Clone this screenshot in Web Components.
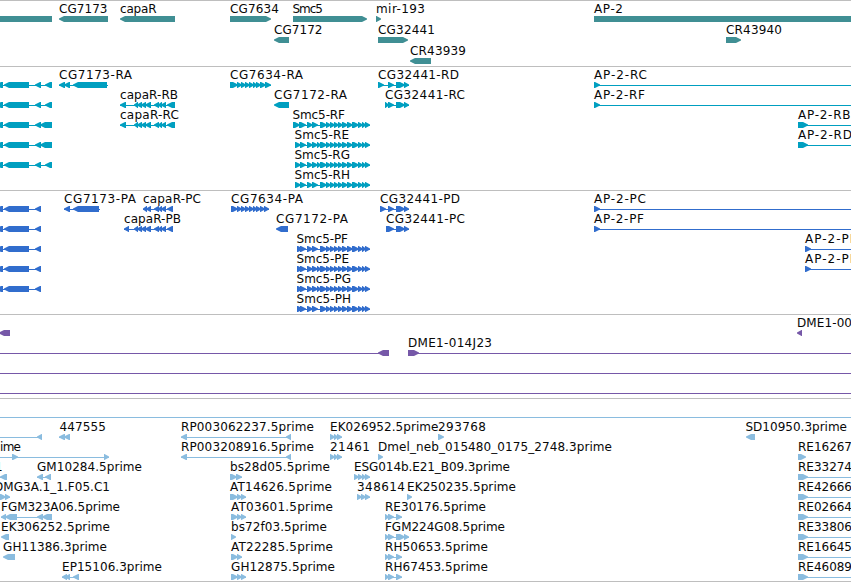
<!DOCTYPE html>
<html lang="en"><head><meta charset="utf-8"><title>Genome browser</title>
<style>html,body{margin:0;background:#fff;overflow:hidden}</style></head><body>
<genome-browser>
<genome-track name="genes" pitch="21" style="--ink:#408f94;height:65px"></genome-track>
<genome-track name="transcripts" pitch="20" style="--ink:#009fc0;height:123px"></genome-track>
<genome-track name="proteins" pitch="20" style="--ink:#316dcd;height:123px"></genome-track>
<genome-track name="clones" pitch="20" style="--ink:#7658a8;height:83px"></genome-track>
<genome-track name="ests" pitch="20" style="--ink:#8abcdf;height:182px"></genome-track>
</genome-browser>
<script>
// Feature: [label, label start, label end, strand, exons, backbone start, backbone end]
const f=(t,x,e,s,ex,a,b)=>({t,x,e,s,ex,a,b});
// Splits a run of adjoining exons into start/end pairs
const run=(...p)=>p.slice(0,-1).map((v,i)=>[v,p[i+1]]);
const W=852;
const lm=l=>f('',0,0,-1,[[-4,3],[4,29],[35,41],[l,52]]);
const lp=()=>f('',0,0,-1,[[-4,3],[4,29],[35,41]]);
const cap=[...run(134,138,142,146,151),...run(154,159,162,166)];
const capM=[[120,126],...cap,[167,175]];
const smTail=run(326,330,334,338,342,347,352,358,362,365,370);
const sm=(s,x)=>[[s,s+6],[s===293?299:300,306],[307,312],[312,318],...(x?[[317,321]]:[]),[320,326],...smTail];
const cg=[[396,404],[404,409]];
const re=[[385,389],[388,394],[396,402]];
const DATA={
genes:[[f('',0,0,0,[[-4,52]]),f('CG7173',59,107.5,-1,[[59,108]]),f('capaR',120,156.5,-1,[[120,175]]),f('CG7634',230,279,1,[[230,271]]),f('Smc5',292.5,323,1,[[293,367]]),f('mir-193',376,425,1,[[376,381]]),f('AP-2',594,623,0,[[594,W]])],
[f('CG7172',274,322.5,-1,[[274,289]]),f('CG32441',378,435,1,[[378,408]]),f('CR43940',726,782,1,[[726,741]])],
[f('CR43939',410,466,-1,[[410,431]])]],
transcripts:[[lm(45),f('CG7173-RA',59,132,-1,[[59,65],[64,70],[73,107]],59,108),f('CG7634-RA',230,303,1,run(230,237,241,245,249,253,256,260,265,271)),f('CG32441-RD',378,459,1,[[378,384],[388,394],...cg]),f('AP-2-RC',594,647,1,[[594,600]],594,W)],
[lm(45),f('capaR-RB',120,178,-1,capM),f('CG7172-RA',274,347,-1,[[274,289]]),f('CG32441-RC',385,465,1,[[385,389],[388,394],...cg]),f('AP-2-RF',594,645,1,[[594,600]],594,W)],
[lm(41),f('capaR-RC',120,179,-1,capM),f('Smc5-RF',292.5,345,1,sm(293)),f('AP-2-RB',798,850.5,1,[[798,808]],798,W)],
[lm(41),f('Smc5-RE',294.5,349,1,sm(295,1)),f('AP-2-RD',798,852,1,[[798,808]],798,W)],
[lm(45),f('Smc5-RG',294.5,350,1,sm(295,1))],[f('Smc5-RH',294.5,350,1,sm(295))]],
proteins:[[lp(),f('CG7173-PA',64,136,-1,[[64,70],[73,99]],64,100),f('capaR-PC',143,201,-1,[...run(143,147,151),...run(154,159,162,166),[167,173]]),f('CG7634-PA',231,303,1,run(231,237,241,245,249,253,256,260,264,269)),f('CG32441-PD',380,460,1,[[380,386],[388,394],...cg]),f('AP-2-PC',594,646,1,[[594,600]],594,W)],
[lp(),f('capaR-PB',124,181,-1,[[124,129],...cap,[167,173]]),f('CG7172-PA',276,348,-1,[[276,288]]),f('CG32441-PC',386,465,1,[[386,394],...cg]),f('AP-2-PF',594,644,1,[[594,600]],594,W)],
[lp(),f('Smc5-PF',296.5,348,1,sm(297)),f('AP-2-PB',805,858,1,[[805,811]],805,W)],
[lp(),f('Smc5-PE',296.5,349,1,sm(297,1)),f('AP-2-PD',805,859,1,[[805,811]],805,W)],
[lp(),f('Smc5-PG',296.5,351,1,sm(297,1))],[f('Smc5-PH',296.5,351,1,sm(297))]],
clones:[[f('',0,0,-1,[[-1,10]]),f('DME1-00',797,852,-1,[[797,802]])],
[f('',0,0,-1,[[378,389]],0,389),f('DME1-014J23',408,492,1,[[408,419]],408,W)],
[f('',0,0,0,[],0,W)],[f('',0,0,0,[],0,W)]],
ests:[[f('',0,0,0,[],0,W)],
[f('',0,0,-1,[[37,42]],0,42),f('447555',59.5,106,-1,[[59,65],[64,70]]),f('RP003062237.5prime',181,314,-1,[[181,187],[286,291]]),f('EK026952.5prime',330,438.5,1,[[330,334],[334,338],[337,342]]),f('293768',438,486,1,[[438,444]]),f('SD10950.3prime',745.5,847,-1,[[746,755]])],
[f('ime',0,21,1,[[12,18],[104,109]],0,109),f('RP003208916.5prime',181,314,-1,[[181,187],[286,291]]),f('21461',330,370,1,[[330,334],[334,338],[337,342]]),f('Dmel_neb_015480_0175_2748.3prime',378,612,1,[[378,383]]),f('RE16267',798,852,1,[[798,806]])],
[f('1',-5,2.5,-1,[[0,7]],-1,7),f('GM10284.5prime',37,142,-1,[[37,43],[45,51]]),f('bs28d05.5prime',230,330,1,[[230,237],[236,242]]),f('ESG014b.E21_B09.3prime',354,510,1,run(354,358,362,365,370)),f('RE33274',798,852,1,[[798,808]],798,W)],
[f('DMG3A.1_1.F05.C1',-6,110,1,[[-3,5],[5,10]]),f('AT14626.5prime',230,332,1,run(230,237,241,246)),f('348614',357,405,1,run(357,361,365,370)),f('EK250235.5prime',407,516,1,[[407,412]]),f('RE42666',798,852,1,[[798,808]],798,W)],
[f('FGM323A06.5prime',1,120,-1,[[1,6],[5,17],[37,43],[42,52]]),f('AT03601.5prime',231,333,1,run(231,237,241,246)),f('RE30176.5prime',385,486,1,re),f('RE02664',798,852,1,[[798,808]],798,W)],
[f('EK306252.5prime',1,110,-1,[[1,9]]),f('bs72f03.5prime',231,327,1,[[231,236]]),f('FGM224G08.5prime',385,505,1,[[385,389],[388,394],[396,404],[404,409]]),f('RE33806',798,852,1,[[798,808]],798,W)],
[f('GH11386.3prime',3,107,-1,[[3,15]]),f('AT22285.5prime',231,333,1,[[231,237],[237,242]]),f('RH50653.5prime',385,488,1,re),f('RE16645',798,852,1,[[798,808]],798,W)],
[f('EP15106.3prime',62,162,-1,[[62,67],[65,70],[73,79]]),f('GH12875.5prime',231,335,1,run(231,237,241,246)),f('RH67453.5prime',385,488,1,re),f('RE46089',798,852,1,[[798,808]],798,W)]]};

class GenomeBrowser extends HTMLElement{
 constructor(){super();this.attachShadow({mode:'open'}).innerHTML=`<style>:host{display:flex;flex-direction:column;box-sizing:border-box;width:851px;height:582px;overflow:hidden;background:#fff;border-bottom:1px solid #bebebe;color:#080808;font:12px "DejaVu Sans",Verdana,sans-serif}</style><slot></slot>`}
}
class GenomeTrack extends HTMLElement{
 connectedCallback(){
  const r=this.attachShadow({mode:'open'});
  r.innerHTML='<style>:host{display:flex;flex-direction:column;flex:none;border-top:1px solid #bebebe}feature-row{flex:none}</style>';
  const pitch=+this.getAttribute('pitch');
  if(pitch===20)r.firstChild.textContent+='feature-row:first-of-type{margin-top:1px}';
  for(const items of DATA[this.getAttribute('name')]){const e=document.createElement('feature-row');e.items=items;e.pitch=pitch;r.append(e)}
 }
}
class FeatureRow extends HTMLElement{
 connectedCallback(){
  const h=this.pitch,y=h-6;let s='',t='';
  for(const g of this.items){
   const a=g.a??Math.min(...g.ex.map(v=>v[0])),b=g.b??Math.max(...g.ex.map(v=>v[1]));
   if(g.ex.length!==1||g.a!==undefined)s+=`<rect x="${a}" y="${y+3}" width="${b-a}" height="1"/>`;
   g.ex.forEach(([p,q],i)=>{
    if(!g.s){s+=`<rect x="${p}" y="${y}" width="${q-p}" height="6"/>`;return}
    // Arrowheads of adjoining exons overlap the neighbour's body
    const next=g.ex[i+1],prev=g.ex[i-1];
    if(g.s>0&&next&&next[0]===q)q+=1;
    if(g.s<0&&prev&&prev[1]===p)p-=1;
    const k=Math.min(5,q-p-.5);
    s+=g.s>0?`<polygon points="${p},${y} ${q-k},${y} ${q},${y+2.5} ${q},${y+3.5} ${q-k},${y+6} ${p},${y+6}"/>`
     :`<polygon points="${q},${y} ${p+k},${y} ${p},${y+2.5} ${p},${y+3.5} ${p+k},${y+6} ${q},${y+6}"/>`;
   });
   if(g.t)t+=`<text x="${g.x}" y="${h-9}" textLength="${g.e-g.x}">${g.t}</text>`;
  }
  this.attachShadow({mode:'open'}).innerHTML=`<style>:host{display:block;height:${h}px}svg{display:block;overflow:visible}g{fill:var(--ink)}text{fill:currentColor}</style><svg width="851" height="${h}"><g>${s}</g>${t}</svg>`;
 }
}
customElements.define('feature-row',FeatureRow);
customElements.define('genome-track',GenomeTrack);
customElements.define('genome-browser',GenomeBrowser);
</script></body></html>
